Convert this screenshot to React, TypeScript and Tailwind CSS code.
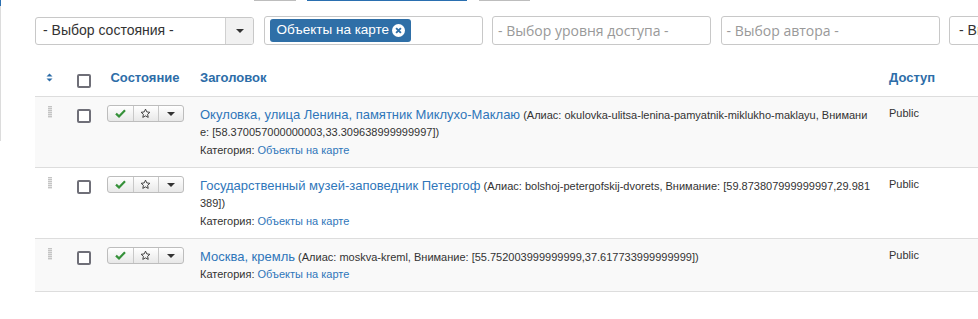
import React from "react";

type Row = {
  title: string;
  alias1: string;
  alias2?: string;
  bg: string;
  h: string;
};

const rows: Row[] = [
  {
    title: "Окуловка, улица Ленина, памятник Миклухо-Маклаю",
    alias1: " (Алиас: okulovka-ulitsa-lenina-pamyatnik-miklukho-maklayu, Внимани",
    alias2: "е: [58.370057000000003,33.309638999999997])",
    bg: "bg-[#f9f9f9]",
    h: "h-[71px]",
  },
  {
    title: "Государственный музей-заповедник Петергоф",
    alias1: " (Алиас: bolshoj-petergofskij-dvorets, Внимание: [59.873807999999997,29.981",
    alias2: "389])",
    bg: "bg-white",
    h: "h-[71px]",
  },
  {
    title: "Москва, кремль",
    alias1: " (Алиас: moskva-kreml, Внимание: [55.752003999999999,37.617733999999999])",
    bg: "bg-[#f9f9f9]",
    h: "h-[53px]",
  },
];

function Caret({ className = "" }: { className?: string }) {
  return (
    <svg width="8" height="4" viewBox="0 0 8 4" className={className}>
      <path d="M0 0 L8 0 L4 4 Z" fill="#333" />
    </svg>
  );
}

function Checkbox() {
  return <div className="w-[14px] h-[14px] rounded-[2px] border-2 border-[#6f6f78] bg-white" />;
}

function DragHandle() {
  const dots = [];
  for (let i = 0; i < 6; i++) {
    dots.push(<rect key={"a" + i} x="0" y={i * 2} width="4" height="1.4" fill="#c4c4c4" />);
  }
  return (
    <svg width="4" height="12" viewBox="0 0 4 12">
      {dots}
    </svg>
  );
}

function StatusButtons() {
  return (
    <div className="flex h-[17px] w-[77px] rounded-[3px] border border-[#bdbdbd] bg-gradient-to-b from-white to-[#e8e8e8] overflow-hidden">
      <div className="w-[26px] flex items-center justify-center border-r border-[#c8c8c8]">
        <svg width="11" height="9" viewBox="0 0 11 9">
          <path d="M1 4.6 L4 7.4 L10 1.2" fill="none" stroke="#36913a" strokeWidth="2.2" />
        </svg>
      </div>
      <div className="w-[25px] flex items-center justify-center border-r border-[#c8c8c8]">
        <svg width="11" height="11" viewBox="0 0 24 24">
          <path
            d="M12 2.5 L14.9 8.6 L21.5 9.4 L16.6 13.9 L17.9 20.5 L12 17.2 L6.1 20.5 L7.4 13.9 L2.5 9.4 L9.1 8.6 Z"
            fill="none"
            stroke="#333"
            strokeWidth="2"
            strokeLinejoin="round"
          />
        </svg>
      </div>
      <div className="flex-1 flex items-center justify-center">
        <Caret />
      </div>
    </div>
  );
}

export default function App() {
  return (
    <div className="flex w-[978px] h-[319px] overflow-hidden bg-white text-[#333] [font-family:'Liberation_Sans',Arial,sans-serif]">
      <div className="flex flex-col w-px shrink-0">
        <div className="h-[6px] bg-[#2a6fb0]" />
        <div className="h-[135px] bg-[#dcdcdc]" />
      </div>
      <div className="flex-1 min-w-0 pl-[34px]">
        {/* bottoms of toolbar buttons above */}
        <div className="flex h-[2px]">
          <div className="ml-[219px] w-[42px] h-px bg-[#bdbdbd]" />
          <div className="ml-[11px] w-[160px] h-px bg-[#2a6fb0]" />
          <div className="ml-[12px] w-[51px] h-px bg-[#bdbdbd]" />
        </div>

        {/* filters */}
        <div className="mt-[14px] flex items-center gap-[9.5px] h-[29px] whitespace-nowrap">
          <div className="w-[219px] shrink-0 h-[28px] flex rounded-[3px] border border-[#c8c8c8] bg-white overflow-hidden">
            <div className="flex-1 flex items-center pl-[7px] text-[14px] text-[#333]">- Выбор состояния -</div>
            <div className="w-[28px] flex items-center justify-center border-l border-[#d0d0d0] bg-[#f1f1f1]">
              <Caret />
            </div>
          </div>
          <div className="w-[219px] shrink-0 h-[29px] flex items-center rounded-[3px] border border-[#c8c8c8] bg-white pl-[5px]">
            <div className="h-[23px] flex items-center gap-[3px] rounded-[3px] bg-[#2f6fa7] pl-[7px] pr-[6px] text-[13.5px] text-white">
              <span>Объекты на карте</span>
              <svg width="13" height="13" viewBox="0 0 12 12">
                <circle cx="6" cy="6" r="6" fill="white" />
                <path d="M3.8 3.8 L8.2 8.2 M8.2 3.8 L3.8 8.2" stroke="#2f6fa7" strokeWidth="1.8" />
              </svg>
            </div>
          </div>
          <div className="w-[219px] shrink-0 h-[29px] flex items-center rounded-[3px] border border-[#c8c8c8] bg-white pl-[5px] text-[14px] text-[#999] [font-family:'Open_Sans',sans-serif]">
            - Выбор уровня доступа -
          </div>
          <div className="w-[219px] shrink-0 h-[29px] flex items-center rounded-[3px] border border-[#c8c8c8] bg-white pl-[5px] text-[14px] text-[#999] [font-family:'Open_Sans',sans-serif]">
            - Выбор автора -
          </div>
          <div className="w-[219px] shrink-0 h-[29px] flex items-center rounded-[3px] border border-[#c8c8c8] bg-white pl-[9px] text-[14px] text-[#333]">
            - Вы
          </div>
        </div>

        {/* table */}
        <div className="mt-[16px] w-[1000px]">
          <div className="grid grid-cols-[34px_29px_94px_689px_154px] h-[36px] border-b border-[#dddddd] text-[13px] font-bold text-[#2d6da8] leading-[18px]">
            <div className="pl-[11px] pt-[12px]">
              <svg width="7" height="9" viewBox="0 0 7 9">
                <path d="M0.5 3.5 L3.5 0.5 L6.5 3.5 Z" fill="#2d6da8" />
                <path d="M0.5 5.5 L3.5 8.5 L6.5 5.5 Z" fill="#2d6da8" />
              </svg>
            </div>
            <div className="pl-[8px] pt-[13px]">
              <Checkbox />
            </div>
            <div className="pt-[8px] text-center">Состояние</div>
            <div className="pt-[8px] pl-[8px]">Заголовок</div>
            <div className="pt-[8px] pl-[8px]">Доступ</div>
          </div>

          {rows.map((r, i) => (
            <div
              key={i}
              className={`grid grid-cols-[34px_29px_94px_689px_154px] border-b border-[#dddddd] ${r.h} ${r.bg}`}
            >
              <div className="pl-[13px] pt-[9px]">
                <DragHandle />
              </div>
              <div className="pl-[8px] pt-[12px]">
                <Checkbox />
              </div>
              <div className="pt-[8px] flex justify-center items-start">
                <StatusButtons />
              </div>
              <div className="px-[8px] pt-[8px] whitespace-nowrap">
                <div className="h-[18px] flex items-baseline leading-none pt-[3px]">
                  <span className="text-[13px] text-[#2f76ba]">{r.title}</span>
                  <span className="text-[11px] text-[#333] whitespace-pre">{r.alias1}</span>
                </div>
                {r.alias2 && (
                  <div className="h-[18px] leading-[18px] text-[11px] text-[#333]">{r.alias2}</div>
                )}
                <div className="h-[18px] leading-[18px] text-[11px] text-[#333]">
                  Категория: <span className="text-[#2f76ba]">Объекты на карте</span>
                </div>
              </div>
              <div className="pl-[8px] pt-[7px] text-[11px] leading-[18px] text-[#333]">Public</div>
            </div>
          ))}
        </div>
      </div>
    </div>
  );
}
